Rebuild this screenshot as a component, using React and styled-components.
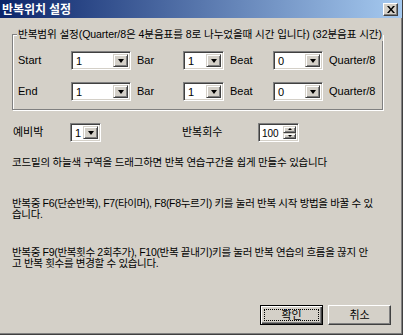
import styled, { createGlobalStyle } from "styled-components";

const GlobalStyle = createGlobalStyle`
  body {
    margin: 0;
    background: #fff;
    font-family: "Liberation Sans", "Noto Sans CJK KR", sans-serif;
    font-size: 11px;
    color: #000;
  }
`;

const Window = styled.div`
  width: 403px;
  height: 335px;
  box-sizing: border-box;
  background: #d4d0c8;
  border-right: 1px solid #404040;
  border-bottom: 1px solid #404040;
  box-shadow: inset -1px -1px 0 #808080;
  display: flex;
  flex-direction: column;
`;

const TitleBar = styled.div`
  height: 18px;
  display: flex;
  align-items: center;
  justify-content: space-between;
  padding: 0 4px 0 2px;
  background: linear-gradient(to right, #0a246a, #a6caf0);
`;

const Title = styled.span`
  color: #fff;
  font-weight: bold;
  font-size: 12px;
  line-height: 18px;
  font-family: "Noto Sans CJK KR", sans-serif;
`;

const CloseButton = styled.div`
  width: 15px;
  height: 13px;
  box-sizing: border-box;
  background: #d4d0c8;
  border: 1px solid;
  border-color: #fff #404040 #404040 #fff;
  box-shadow: inset -1px -1px 0 #808080;
  display: flex;
  align-items: center;
  justify-content: center;
`;

const Body = styled.div`
  flex: 1;
  display: flex;
  flex-direction: column;
  padding: 16px 11px 9px 12px;
`;

const Group = styled.div`
  position: relative;
  width: 371px;
  box-sizing: border-box;
  border: 1px solid #808080;
  box-shadow: inset 1px 1px 0 #fff, 1px 1px 0 #fff;
  padding: 16px 0 8px 5px;
  display: flex;
  flex-direction: column;
  gap: 12px;
`;

const GroupLabel = styled.span`
  position: absolute;
  top: -7px;
  left: 4px;
  padding: 0 1px;
  background: #d4d0c8;
  font-size: 10.6px;
  line-height: 13px;
  letter-spacing: -0.1px;
  white-space: nowrap;
`;

const Row = styled.div`
  display: flex;
  align-items: center;
  height: 19px;
  margin-left: ${(p) => p.$indent || 0}px;
`;

const Label = styled.span`
  width: ${(p) => p.$w}px;
  padding-left: ${(p) => p.$pad || 0}px;
  box-sizing: border-box;
  flex-shrink: 0;
  white-space: nowrap;
  line-height: 13px;
`;

const Sunken = styled.div`
  width: ${(p) => p.$w}px;
  height: 19px;
  box-sizing: border-box;
  flex-shrink: 0;
  background: #fff;
  border: 1px solid;
  border-color: #808080 #fff #fff #808080;
  box-shadow: inset 1px 1px 0 #404040, inset -1px -1px 0 #d4d0c8;
  padding: 2px;
  display: flex;
  align-items: stretch;
`;

const Value = styled.span`
  flex: 1;
  padding-left: ${(p) => p.$pad ?? 2}px;
  line-height: 15px;
  font-size: ${(p) => p.$size || 11}px;
`;

const DropButton = styled.div`
  width: 15px;
  box-sizing: border-box;
  background: #d4d0c8;
  border: 1px solid;
  border-color: #d4d0c8 #404040 #404040 #d4d0c8;
  box-shadow: inset 1px 1px 0 #fff, inset -1px -1px 0 #808080;
  display: flex;
  align-items: center;
  justify-content: center;
`;

const Arrow = styled.span`
  width: 0;
  height: 0;
  border-left: 3.5px solid transparent;
  border-right: 3.5px solid transparent;
  border-top: 4px solid #000;
`;

const SpinColumn = styled.div`
  width: 13px;
  display: flex;
  flex-direction: column;
`;

const SpinButton = styled(DropButton)`
  width: 13px;
  flex: 1;
`;

const SmallArrow = styled.span`
  width: 0;
  height: 0;
  border-left: 2px solid transparent;
  border-right: 2px solid transparent;
  border-${(p) => (p.$up ? "bottom" : "top")}: 2px solid #000;
`;

const Note = styled.p`
  margin: ${(p) => p.$top}px 0 0 0;
  font-size: 10.5px;
  line-height: ${(p) => p.$lh || 11}px;
  letter-spacing: ${(p) => p.$ls || 0}px;
  white-space: nowrap;
`;

const Buttons = styled.div`
  margin-top: auto;
  display: flex;
  justify-content: flex-end;
  gap: 5px;
`;

const Button = styled.div`
  width: 63px;
  height: 20px;
  box-sizing: border-box;
  background: #d4d0c8;
  border: 1px solid;
  border-color: ${(p) => (p.$default ? "#000" : "#fff #404040 #404040 #fff")};
  box-shadow: ${(p) =>
    p.$default
      ? "inset 1px 1px 0 #fff, inset -1px -1px 0 #404040, inset -2px -2px 0 #808080"
      : "inset -1px -1px 0 #808080"};
  display: flex;
  align-items: center;
  justify-content: center;
  padding: 3px;
`;

const Focus = styled.span`
  flex: 1;
  align-self: stretch;
  display: flex;
  align-items: center;
  justify-content: center;
  border: 1px dotted ${(p) => (p.$on ? "#000" : "transparent")};
  line-height: 12px;
`;

function Combo({ w, value }) {
  return (
    <Sunken $w={w}>
      <Value>{value}</Value>
      <DropButton>
        <Arrow />
      </DropButton>
    </Sunken>
  );
}

function Spinner({ w, value }) {
  return (
    <Sunken $w={w}>
      <Value $pad={1} $size={10}>{value}</Value>
      <SpinColumn>
        <SpinButton>
          <SmallArrow $up />
        </SpinButton>
        <SpinButton>
          <SmallArrow />
        </SpinButton>
      </SpinColumn>
    </Sunken>
  );
}

function RangeRow({ label }) {
  return (
    <Row>
      <Label $w={53}>{label}</Label>
      <Combo w={60} value="1" />
      <Label $w={52} $pad={6}>Bar</Label>
      <Combo w={41} value="1" />
      <Label $w={49} $pad={6}>Beat</Label>
      <Combo w={50} value="0" />
      <Label $w={60} $pad={6}>Quarter/8</Label>
    </Row>
  );
}

export default function App() {
  return (
    <>
      <GlobalStyle />
      <Window>
        <TitleBar>
          <Title>반복위치 설정</Title>
          <CloseButton>
            <svg width="8" height="7" viewBox="0 0 8 7">
              <path d="M0 0h2l2 2.5L6 0h2L5 3.5 8 7H6L4 4.5 2 7H0l3-3.5z" fill="#000" />
            </svg>
          </CloseButton>
        </TitleBar>
        <Body>
          <Group>
            <GroupLabel>
              반복범위 설정(Quarter/8은 4분음표를 8로 나누었을때 시간 입니다) (32분음표 시간)
            </GroupLabel>
            <RangeRow label="Start" />
            <RangeRow label="End" />
          </Group>
          <Row $indent={1} style={{ marginTop: 13 }}>
            <Label $w={57}>예비박</Label>
            <Combo w={31} value="1" />
            <Label $w={81} />
            <Label $w={76}>반복회수</Label>
            <Spinner w={41} value="100" />
          </Row>
          <Note $top={14} $lh={12} $ls={-0.2}>
            코드밑의 하늘색 구역을 드래그하면 반복 연습구간을 쉽게 만들수 있습니다
          </Note>
          <Note $top={30} $ls={-0.32}>
            반복중 F6(단순반복), F7(타이머), F8(F8누르기) 키를 눌러 반복 시작 방법을 바꿀 수 있
            <br />
            습니다.
          </Note>
          <Note $top={27} $ls={-0.32}>
            반복중 F9(반복횟수 2회추가), F10(반복 끝내기)키를 눌러 반복 연습의 흐름을 끊지 안
            <br />
            고 반복 횟수를 변경할 수 있습니다.
          </Note>
          <Buttons>
            <Button $default>
              <Focus $on>확인</Focus>
            </Button>
            <Button>
              <Focus>취소</Focus>
            </Button>
          </Buttons>
        </Body>
      </Window>
    </>
  );
}
